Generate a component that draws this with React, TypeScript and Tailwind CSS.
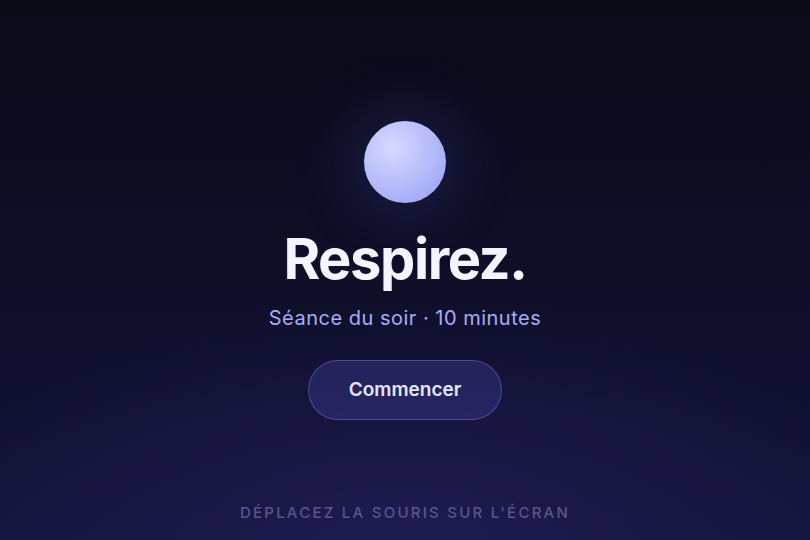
export default function App() {
  return (
    <div
      className="grid h-screen w-full grid-rows-[1fr_auto_1fr] justify-items-center bg-[radial-gradient(ellipse_60%_45%_at_50%_100%,rgba(58,48,140,0.3),transparent_100%),linear-gradient(180deg,#0a0a17_0%,#0e0e26_45%,#14133a_100%)] text-white"
      style={{ fontFamily: 'Inter, "Noto Sans", sans-serif' }}
    >
      <div />
      <main className="flex flex-col items-center">
        <div className="h-[82px] w-[82px] rounded-full bg-[radial-gradient(circle_at_35%_32%,#d6daff_0%,#bcc1fb_40%,#979ef3_100%)] shadow-[0_0_60px_14px_rgba(99,102,241,0.18)]" />
        <h1 className="mt-7 text-[56px] leading-none font-bold tracking-tight text-[#f3f4ff]">
          Respirez.
        </h1>
        <p className="mt-[17px] text-xl tracking-wide text-[#a9acf5]">Séance du soir · 10 minutes</p>
        <button
          type="button"
          className="mt-7 rounded-full border border-[#a5a8ff]/30 bg-[#6366f1]/20 px-10 py-[15px] text-[19px] leading-7 font-semibold text-[#e4e6ff]"
        >
          Commencer
        </button>
      </main>
      <p className="self-end pb-4 text-[15px] font-medium tracking-[0.15em] text-[#55578e] uppercase">
        Déplacez la souris sur l'écran
      </p>
    </div>
  );
}
